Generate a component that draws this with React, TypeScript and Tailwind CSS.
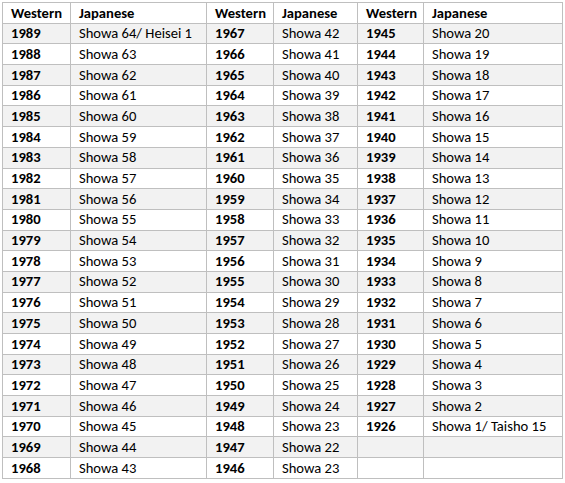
import { Fragment } from "react"

const groups: [string, string][][] = [
  [
    ["1989", "Showa 64/ Heisei 1"],
    ...Array.from({ length: 21 }, (_, i): [string, string] => [String(1988 - i), `Showa ${63 - i}`]),
  ],
  [
    ...Array.from({ length: 21 }, (_, i): [string, string] => [String(1967 - i), `Showa ${42 - i}`]),
    ["1946", "Showa 23"],
  ],
  [
    ...Array.from({ length: 19 }, (_, i): [string, string] => [String(1945 - i), `Showa ${20 - i}`]),
    ["1926", "Showa 1/ Taisho 15"],
    ["", ""],
    ["", ""],
  ],
]

const cell = "border border-[#bfbfbf] px-[8px] py-0 text-left align-middle whitespace-nowrap overflow-hidden"

export default function App() {
  const rows = groups[0].map((_, i) => groups.map((g) => g[i]))

  return (
    <div className="w-[565px] h-[483px] bg-white pl-[2px] pt-[2px]" style={{ fontFamily: "Carlito, Lato, 'Open Sans', sans-serif" }}>
      <table className="table-fixed border-collapse w-[560px] text-[14.6px] leading-none text-black">
        <colgroup>
          <col className="w-[68px]" />
          <col className="w-[136px]" />
          <col className="w-[67px]" />
          <col className="w-[84px]" />
          <col className="w-[66px]" />
          <col className="w-[139px]" />
        </colgroup>
        <thead>
          <tr className="h-[20.7px] bg-white">
            {[0, 1, 2].map((g) => (
              <Fragment key={g}>
                <th className={`${cell} font-bold`}>Western</th>
                <th className={`${cell} font-bold`}>Japanese</th>
              </Fragment>
            ))}
          </tr>
        </thead>
        <tbody>
          {rows.map((row, i) => (
            <tr key={i} className={`h-[20.7px] ${i % 2 === 0 ? "bg-[#f2f2f2]" : "bg-white"}`}>
              {row.map(([year, era], g) => (
                <Fragment key={g}>
                  <td className={`${cell} font-bold`}>{year}</td>
                  <td className={cell}>{era}</td>
                </Fragment>
              ))}
            </tr>
          ))}
        </tbody>
      </table>
    </div>
  )
}
